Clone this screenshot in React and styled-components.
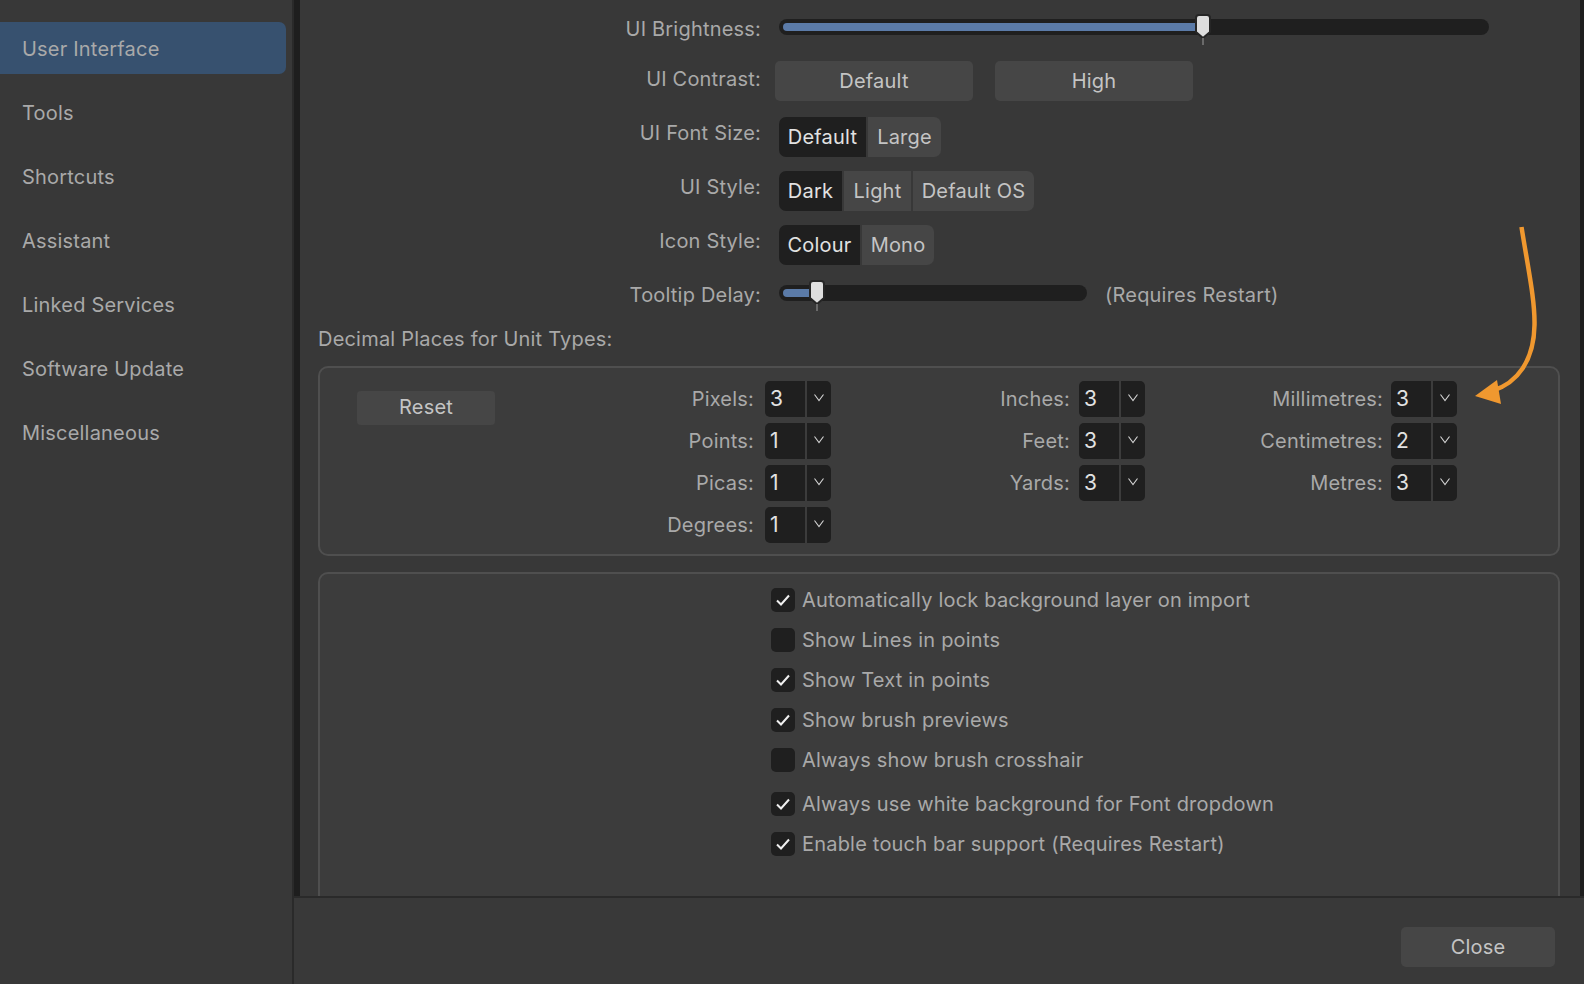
import React from 'react';
import styled, { createGlobalStyle } from 'styled-components';

const Global = createGlobalStyle`
  html, body { margin: 0; padding: 0; background: #383838; }
  * { box-sizing: border-box; }
  body { font-family: Inter, "Liberation Sans", sans-serif; }
`;

const Window = styled.div`
  width: 1584px; height: 984px; display: flex; overflow: hidden; position: relative;
  background: #383838; font-size: 20px; color: #a9a9a9; letter-spacing: 0.2px;
`;
const Sidebar = styled.nav`
  width: 294px; flex: none; padding-top: 22px; background: #383838;
  border-right: 2px solid #2a2a2a; display: flex; flex-direction: column; gap: 12px;
`;
const NavItem = styled.div`
  width: 286px; height: 52px; display: flex; align-items: center; padding: 2px 0 0 22px;
  border-radius: ${p => (p.$active ? '0 7px 7px 0' : '0')};
  background: ${p => (p.$active ? '#37516f' : 'transparent')};
`;
const Right = styled.div`flex: 1; display: flex; flex-direction: column; min-width: 0;`;
const Scroller = styled.div`
  height: 896px; flex: none; overflow: hidden; background: #383838; display: flex;
  flex-direction: column; padding: 0 20px 0 18px;
  border-left: 6px solid #1e1e1e; border-right: 4px solid #1e1e1e;
`;
const Footer = styled.footer`
  flex: 1; background: #393939; border-top: 2px solid #2a2a2a;
  display: flex; justify-content: flex-end; align-items: flex-start; padding: 29px 29px 0 0;
`;
const Row = styled.div`
  display: flex; align-items: center; flex: none;
  height: ${p => p.$h || 40}px; margin-top: ${p => p.$mt || 0}px;
`;
const Label = styled.div`
  width: 443px; text-align: right; flex: none; margin-right: ${p => p.$gap ?? 18}px;
  transform: translateY(${p => p.$dy ?? -4}px); white-space: nowrap;
`;
const Track = styled.div`
  position: relative; width: ${p => p.$w}px; height: 16px; border-radius: 8px; background: #1f1f1f; flex: none;
`;
const Fill = styled.div`
  position: absolute; left: 4px; top: 4px; height: 8px; border-radius: 4px 0 0 4px; background: #5b7ba8;
`;
const Thumb = styled.svg`
  position: absolute; top: -5px; margin-left: -8px;
`;
const Tick = styled.div`
  position: absolute; top: 19px; width: 2px; height: 7px; margin-left: -1px; background: #6a6a6a;
`;
const WideButton = styled.div`
  height: 40px; width: 198px; display: flex; align-items: center; justify-content: center;
  background: #464646; border-radius: 5px; color: #c4c4c4; flex: none;
  margin-left: ${p => p.$ml || 0}px;
`;
const Seg = styled.div`display: flex; gap: 2px; height: 40px; flex: none; border-radius: 7px; overflow: hidden;`;
const SegItem = styled.div`
  width: ${p => p.$w}px; display: flex; align-items: center; justify-content: center;
  background: ${p => (p.$on ? '#1f1f1f' : '#464646')}; color: ${p => (p.$on ? '#e2e2e2' : '#c4c4c4')};
`;
const Note = styled.div`margin-left: 18px; color: #a9a9a9; transform: translateY(2px);`;
const Heading = styled.div`flex: none; height: 24px; margin-top: 26px; line-height: 24px; white-space: nowrap;`;
const Box = styled.section`
  background: #3c3c3c; border: 2px solid #4f4f4f; border-radius: 10px; flex: none;
  height: ${p => p.$h}px; margin-top: ${p => p.$mt}px;
`;
const Units = styled.div`
  display: grid; grid-template-columns: 175px 336px 314px 312px; padding-top: 13px;
`;
const ResetCell = styled.div`padding: 10px 0 0 37px;`;
const Reset = styled.div`
  width: 138px; height: 34px; background: #464646; border-radius: 4px; color: #c4c4c4;
  display: flex; align-items: center; justify-content: center; padding-bottom: 2px;
`;
const UnitCol = styled.div`display: flex; flex-direction: column; gap: 6px; align-items: flex-end;`;
const UnitRow = styled.div`display: flex; align-items: center; gap: ${p => p.$gap}px; height: 36px;`;
const UnitLabel = styled.div`white-space: nowrap;`;
const Spinner = styled.div`display: flex; gap: 2px; height: 36px; border-radius: 5px; overflow: hidden;`;
const SpinValue = styled.div`
  width: 40px; background: #1f1f1f; color: #e2e2e2; display: flex; align-items: center;
  padding: 0 0 2px 5px; font-size: 21px;
`;
const SpinArrow = styled.div`
  width: 24px; background: #1f1f1f; display: flex; align-items: center; justify-content: center; padding-bottom: 3px;
`;
const Checks = styled.div`
  display: flex; flex-direction: column; padding: 14px 0 0 451px;
`;
const CheckRow = styled.div`
  display: flex; align-items: center; gap: 7px; height: 24px; margin-bottom: ${p => p.$mb ?? 16}px; white-space: nowrap;
`;
const CheckBox = styled.div`
  width: 24px; height: 24px; margin-top: -1px; border-radius: 5px; background: #1f1f1f; flex: none;
  display: flex; align-items: center; justify-content: center;
`;
const CloseButton = styled.div`
  width: 154px; height: 40px; background: #464646; border-radius: 5px; color: #c4c4c4;
  display: flex; align-items: center; justify-content: center;
`;
const Annotation = styled.svg`position: absolute; left: 0; top: 0; pointer-events: none;`;

const Chevron = () => (
  <svg width="12" height="9" viewBox="0 0 12 9" fill="none">
    <path d="M1.5 1.5 L6 7.5 L10.5 1.5" stroke="#d4d4d4" strokeWidth="1.1" />
  </svg>
);
const CheckMark = () => (
  <svg width="16" height="14" viewBox="0 0 16 14" fill="none">
    <path d="M2 7.5 L6 11.5 L14 2.5" stroke="#f0f0f0" strokeWidth="2" />
  </svg>
);
const SliderThumb = ({ left }) => (
  <Thumb style={{ left }} width="16" height="25" viewBox="0 0 16 25">
    <path d="M4 1 H12 Q15 1 15 4 V18 L8 24 L1 18 V4 Q1 1 4 1 Z" fill="#dedede" stroke="#262626" strokeWidth="2" />
  </Thumb>
);

const nav = ['User Interface', 'Tools', 'Shortcuts', 'Assistant', 'Linked Services', 'Software Update', 'Miscellaneous'];
const units = [
  { gap: 11, rows: [['Pixels', 3], ['Points', 1], ['Picas', 1], ['Degrees', 1]] },
  { gap: 9, rows: [['Inches', 3], ['Feet', 3], ['Yards', 3]] },
  { gap: 8, rows: [['Millimetres', 3], ['Centimetres', 2], ['Metres', 3]] },
];
const checks = [
  ['Automatically lock background layer on import', true],
  ['Show Lines in points', false],
  ['Show Text in points', true],
  ['Show brush previews', true],
  ['Always show brush crosshair', false, 20],
  ['Always use white background for Font dropdown', true],
  ['Enable touch bar support (Requires Restart)', true],
];

const SegRow = ({ label, items, mt }) => (
  <Row $mt={mt}>
    <Label>{label}</Label>
    <Seg>
      {items.map(([t, w], i) => <SegItem key={t} $w={w} $on={i === 0}>{t}</SegItem>)}
    </Seg>
  </Row>
);

export default function App() {
  return (
    <Window>
      <Global />
      <Sidebar>
        {nav.map((n, i) => <NavItem key={n} $active={i === 0}>{n}</NavItem>)}
      </Sidebar>
      <Right>
        <Scroller>
          <Row $mt={7}>
            <Label $dy={2}>UI Brightness:</Label>
            <Track $w={710}>
              <Fill style={{ width: 416 }} />
              <SliderThumb left={424} />
              <Tick style={{ left: 424 }} />
            </Track>
          </Row>
          <Row $mt={14}>
            <Label $gap={14} $dy={-2}>UI Contrast:</Label>
            <WideButton>Default</WideButton>
            <WideButton $ml={22}>High</WideButton>
          </Row>
          <SegRow label="UI Font Size:" mt={16} items={[['Default', 87], ['Large', 73]]} />
          <SegRow label="UI Style:" mt={14} items={[['Dark', 63], ['Light', 67], ['Default OS', 121]]} />
          <SegRow label="Icon Style:" mt={14} items={[['Colour', 81], ['Mono', 72]]} />
          <Row $h={16} $mt={20}>
            <Label $dy={2}>Tooltip Delay:</Label>
            <Track $w={308}>
              <Fill style={{ width: 30 }} />
              <SliderThumb left={38} />
              <Tick style={{ left: 38 }} />
            </Track>
            <Note>(Requires Restart)</Note>
          </Row>
          <Heading>Decimal Places for Unit Types:</Heading>
          <Box $h={190} $mt={15}>
            <Units>
              <ResetCell><Reset>Reset</Reset></ResetCell>
              {units.map((col, i) => (
                <UnitCol key={i}>
                  {col.rows.map(([l, v]) => (
                    <UnitRow key={l} $gap={col.gap}>
                      <UnitLabel>{l}:</UnitLabel>
                      <Spinner>
                        <SpinValue>{v}</SpinValue>
                        <SpinArrow><Chevron /></SpinArrow>
                      </Spinner>
                    </UnitRow>
                  ))}
                </UnitCol>
              ))}
            </Units>
          </Box>
          <Box $h={400} $mt={16}>
            <Checks>
              {checks.map(([t, on, mb]) => (
                <CheckRow key={t} $mb={mb}>
                  <CheckBox>{on && <CheckMark />}</CheckBox>
                  {t}
                </CheckRow>
              ))}
            </Checks>
          </Box>
        </Scroller>
        <Footer><CloseButton>Close</CloseButton></Footer>
      </Right>
      <Annotation width="1584" height="984" viewBox="0 0 1584 984">
        <path d="M1521.5 227 C1528 268 1535 300 1534.5 325 C1534 360 1518 383 1492 391" fill="none" stroke="#f0982f" strokeWidth="4.5" />
        <path d="M1475 396 L1497 380 L1501 404 Z" fill="#f0982f" />
      </Annotation>
    </Window>
  );
}
